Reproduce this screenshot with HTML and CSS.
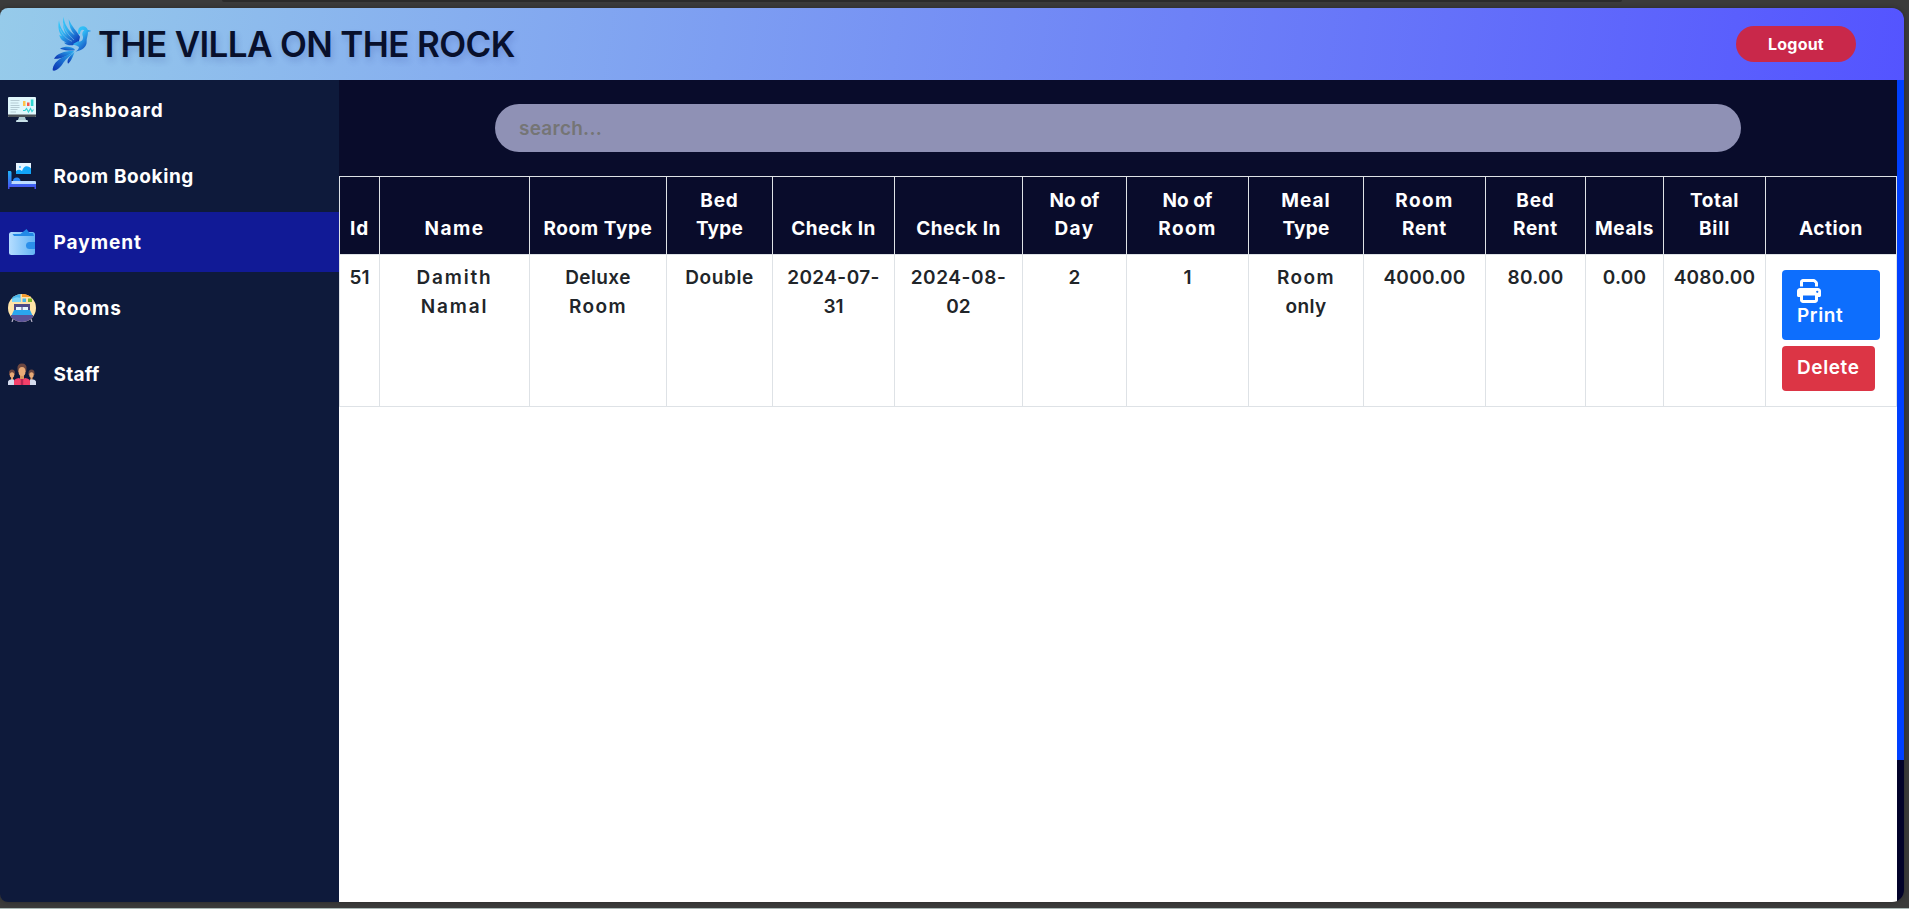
FILE: index.html
```html
<!DOCTYPE html>
<html lang="en">
<head>
<meta charset="utf-8">
<title>The Villa On The Rock</title>
<link rel="stylesheet" href="styles.css">
</head>
<body>
<div class="strip"></div>
<div class="app">
  <header class="header">
    <svg class="bird" viewBox="0 0 120 165">
      <defs>
        <linearGradient id="wing" x1="0" y1="0" x2="0.8" y2="1"><stop offset="0" stop-color="#35d0ff"/><stop offset=".45" stop-color="#2fb4f2"/><stop offset="1" stop-color="#0c35b4"/></linearGradient>
        <linearGradient id="tail" x1="1" y1="0" x2="0" y2="1"><stop offset="0" stop-color="#2cb0f0"/><stop offset="1" stop-color="#0a2eb0"/></linearGradient>
      </defs>
      <path fill="url(#wing)" d="M35 2C36 22 48 42 68 58C56 44 50 26 50 10C58 30 74 46 84 62L80 80L72 84C62 90 46 90 36 80L44 79C34 77 24 69 22 57L30 61C20 50 17 31 21 13C24 34 34 50 46 60C34 46 30 24 35 2Z"/>
      <path fill="none" stroke="#94c6ed" stroke-width="1.6" d="M33 20C37 42 48 56 66 72M24 38C30 56 42 68 60 76"/>
      <path fill="url(#wing)" d="M79 54C76 40 82 31 93 31C100 31 105 36 107 41L118 45L108 48C108 60 103 68 104 76C105 92 92 104 70 107C76 103 80 100 81 93C76 90 70 88 62 85L78 76C88 78 94 71 93 62C89 54 91 48 97 43C92 38 84 42 84 54Z"/>
      <g fill="url(#tail)">
        <path d="M68 100C60 90 38 90 24 98C40 103 54 105 68 103Z"/>
        <path d="M64 105C42 104 14 112 6 128C24 130 46 120 66 107Z"/>
        <path d="M66 108C46 120 4 128 2 163C10 168 26 154 34 140C44 126 56 120 66 108Z"/>
        <path d="M68 108C50 124 44 132 48 143C58 136 62 122 68 108Z"/>
      </g>
    </svg>
    <h1 class="brand">THE VILLA ON THE ROCK</h1>
    <button class="logout">Logout</button>
  </header>
  <div class="body">
    <nav class="sidebar">
      <a class="item">
        <svg class="icon" viewBox="0 0 28 28"><rect y="1" width="28" height="20" rx="1" fill="#e0f7fc"/><path d="M0 18.5h28V20a1 1 0 0 1-1 1H1a1 1 0 0 1-1-1z" fill="#4a5157"/><path d="M11 21h6l1 3h-8z" fill="#a9c6cf"/><path d="M8.500 24h11l.5 2h-12z" fill="#c9e3ea"/><path d="M2.500 4.500h9M2.500 7h8M2.500 9.500h9M2.500 11.500h9M2.500 13.500h7M2.500 16h5.500" stroke="#a9bfc8" stroke-width=".8"/><path d="M15 5h2.500v5H15z" fill="#ffc24a"/><path d="M19 6.500h2.500V10H19z" fill="#f4564e"/><path d="M22.800 3.500h2.600V10h-2.600z" fill="#2fd6d0"/><path d="M15 14.500h2l1.500-2 2 3.500 2-3.500 1.500 3 1.500-2" fill="none" stroke="#3bd3d4" stroke-width="1.200"/></svg>
        <span class="t5">Dashboard</span>
      </a>
      <a class="item">
        <svg class="icon" viewBox="0 0 28 28"><defs><linearGradient id="frame" x1="0" y1="0" x2="0" y2="1"><stop offset="0" stop-color="#1fb3f8"/><stop offset="1" stop-color="#4a4cf0"/></linearGradient></defs><path d="M8 1h15v11H8z" fill="#e6f4ff"/><path d="M8 9q3-2.500 6 0q2-6 6-4.500q2 .5 3 2V12H8z" fill="#12a5f8"/><circle cx="12" cy="5" r="1" fill="#4ab8fa"/><path d="M0 9h2.500q1 0 1 1.500V21H28v6h-1.500v-2H1.500v2H0z" fill="url(#frame)"/><path d="M5 19q0-3.500 4-3.500q3 .3 3.500 3.500z" fill="#2686f7"/><path d="M3.500 19H27q1 0 1 1v2H3.500z" fill="#bcdcff"/></svg>
        <span class="t3">Room Booking</span>
      </a>
      <a class="item active">
        <svg class="icon" viewBox="0 0 28 28"><defs><linearGradient id="wallet"><stop offset="0" stop-color="#b5ddff"/><stop offset="1" stop-color="#62b4f5"/></linearGradient></defs><rect x="1" y="4" width="26" height="23" rx="2.500" fill="url(#wallet)"/><path d="M4.500 6h8L18.500 1l3 4H25l1 3H6z" fill="#2289e6"/><path d="M27 14h-5.500a3.500 3.500 0 0 0 0 7H27z" fill="#2b8fea"/></svg>
        <span class="t5">Payment</span>
      </a>
      <a class="item">
        <svg class="icon" viewBox="0 0 28 28"><defs><clipPath id="disc"><circle cx="14" cy="14" r="14"/></clipPath></defs><g clip-path="url(#disc)"><path d="M0 0h28v28H0z" fill="#ffe4a8"/><path d="M4 0h8.500v8H4z" fill="#46b5ee"/><path d="M4 5q4-3 8.500-1V8H4z" fill="#7bd5fa"/><path d="M14 0h9v3h-9z" fill="#f69a2c"/><path d="M14.500 4.500h3.500V8h-3.500z" fill="#46b5ee"/><path d="M20 4.500h4V8h-4z" fill="#7fb52b"/><path d="M6 10h16v7H6z" fill="#4d4a86"/><path d="M8 13h5.500v3H8zM14.500 13H20v3h-5.500z" fill="#e6f7ff"/><path d="M6 16h16l2.500 5.500h-21z" fill="#2aa6ee"/><path d="M3 21h22v3L20 28H8l-5-4z" fill="#5a5399"/></g><path d="M5 25l-1 3M23 25l1 3" stroke="#b8b4c8" stroke-width="1.200"/></svg>
        <span class="t5">Rooms</span>
      </a>
      <a class="item">
        <svg class="icon" viewBox="0 0 28 28"><path d="M9.500 9Q9 3.500 14 3.500T18.500 9l-.5 3h-8zM1 13q0-3.500 3-3.500T7 13v2H1zM20.500 13q0-3.500 3-3.500t3 3.500v2h-6z" fill="#6d4740"/><path d="M12 15h4v4h-4zM3 17h2v3H3zM22.500 17h2v3h-2z" fill="#d9945c"/><ellipse cx="14" cy="11.500" rx="3.500" ry="4.500" fill="#e9ab77"/><ellipse cx="4" cy="15" rx="2.200" ry="2.800" fill="#e9ab77"/><ellipse cx="23.500" cy="15" rx="2.200" ry="2.800" fill="#e9ab77"/><path d="M0 25v-3q0-2 3-2.500h3V25zM22 25v-5.500h3q3 .5 3 2.500v3z" fill="#d5dcee"/><path d="M6 25v-4q0-2 5-3l3 2 3-2q5 1 5 3v4z" fill="#f4406a"/><path d="M12.800 19h2.400v6h-2.400z" fill="#b72752"/></svg>
        <span class="t1">Staff</span>
      </a>
    </nav>
    <main class="main">
      <div class="searchbar"><input class="search t1" placeholder="search..."></div>
      <table class="table">
        <colgroup><col class="c40"><col class="c150"><col class="c137"><col class="c106"><col class="c122"><col class="c128"><col class="c104"><col class="c122"><col class="c115"><col class="c122"><col class="c100"><col class="c78"><col class="c102"><col class="c131"></colgroup>
        <thead><tr>
          <th class="t4">Id</th>
          <th class="t6">Name</th>
          <th class="t3">Room Type</th>
          <th><span class="t4">Bed</span><br><span class="t1">Type</span></th>
          <th class="t2">Check In</th>
          <th class="t2">Check In</th>
          <th><span class="t0">No of</span><br><span class="t6">Day</span></th>
          <th><span class="t0">No of</span><br><span class="t6">Room</span></th>
          <th><span class="t5">Meal</span><br><span class="t1">Type</span></th>
          <th><span class="t6">Room</span><br><span class="t3">Rent</span></th>
          <th><span class="t4">Bed</span><br><span class="t3">Rent</span></th>
          <th class="t3">Meals</th>
          <th><span class="t3">Total</span><br><span class="t4">Bill</span></th>
          <th class="t3">Action</th>
        </tr></thead>
        <tbody><tr>
          <td>51</td>
          <td class="t7">Damith<br>Namal</td>
          <td><span class="t2">Deluxe</span><br><span class="t6">Room</span></td>
          <td class="t3">Double</td>
          <td><span class="t2">2024-07-</span><br>31</td>
          <td><span class="t3">2024-08-</span><br>02</td>
          <td>2</td>
          <td>1</td>
          <td><span class="t6">Room</span><br><span class="t2">only</span></td>
          <td class="t1">4000.00</td>
          <td class="t1">80.00</td>
          <td class="t1">0.00</td>
          <td class="t1">4080.00</td>
          <td class="actions">
            <button class="btn print"><svg class="printer" viewBox="0 0 512 512"><path fill="#fff" d="M128 0C92.700 0 64 28.700 64 64v96h64V64H354.700L384 93.300V160h64V93.300c0-17-6.700-33.300-18.700-45.300L400 18.700C388 6.700 371.700 0 354.700 0H128zM384 352v96H128V352H384zm64 32h32c17.700 0 32-14.300 32-32V256c0-35.300-28.700-64-64-64H64c-35.300 0-64 28.700-64 64v96c0 17.700 14.300 32 32 32H64v64c0 35.300 28.700 64 64 64H384c35.300 0 64-28.700 64-64V384zM432 248a24 24 0 1 1 0 48 24 24 0 1 1 0-48z"/></svg><span class="t3">Print</span></button>
            <button class="btn delete t3">Delete</button>
          </td>
        </tr></tbody>
      </table>
    </main>
    <div class="scroll"><div class="thumb"></div></div>
  </div>
</div>
<div class="edge"></div>
</body>
</html>
```
FILE: styles.css
```css
* { box-sizing: border-box; }
body {
  margin: 0;
  height: 909px;
  overflow: hidden;
  background: #3b3b3b;
  font: 560 19px/29px Inter, "Open Sans", sans-serif;
  color: #212529;
}
.strip {
  width: 1400px;
  height: 2px;
  margin: 0 0 6px 222px;
  background: #2b2b2b;
  border-radius: 0 0 4px 4px;
}
.app {
  width: 1904px;
  height: 894px;
  overflow: hidden;
  border-radius: 8px 12px 12px 8px;
  box-shadow: 0 0 5px rgba(0, 0, 0, .3);
}
.header {
  display: flex;
  align-items: center;
  height: 72px;
  padding: 0 48px 0 52px;
  background: linear-gradient(98deg, #96cbea, #5454ff);
}
.bird { width: 40px; height: 55px; margin-bottom: 1px; }
.brand {
  flex: 1;
  margin: 0 0 0 6px;
  font-size: 35px;
  line-height: 46px;
  font-weight: 600;
  letter-spacing: -.63px;
  color: #08102c;
  text-shadow: 2px 4px 6px rgba(30, 50, 140, .2);
}
.logout {
  width: 120px;
  height: 36px;
  padding: 0;
  border: 0;
  border-radius: 18px;
  background: #c9284a;
  color: #fff;
  font: 650 16px/36px Inter, sans-serif;
  letter-spacing: .2px;
}
.body { display: flex; height: 822px; }
.sidebar {
  display: flex;
  flex-direction: column;
  gap: 6px;
  width: 339px;
  background: #0e1a3b;
}
.item {
  display: flex;
  align-items: center;
  gap: 17.5px;
  height: 60px;
  padding-left: 8px;
  color: #fff;
  font-weight: 670;
}
.active { background: #111a96; }
.icon { width: 28px; height: 28px; }
.main { width: 1558px; background: #fff; }
.searchbar {
  display: flex;
  justify-content: center;
  align-items: center;
  height: 96px;
  background: #090c2b;
}
.search {
  width: 1246px;
  height: 48px;
  padding: 0 24px;
  border: 0;
  border-radius: 24px;
  background: #8f91b5;
  font: inherit;
}
.search::placeholder { color: #757575; opacity: 1; }
.table {
  width: 1558px;
  table-layout: fixed;
  border-collapse: separate;
  border-spacing: 0;
  border: solid #dee2e6;
  border-width: 1px 0 0 1px;
  text-align: center;
}
.table th, .table td {
  border: solid #dee2e6;
  border-width: 0 1px 1px 0;
  white-space: nowrap;
}
.table th {
  height: 78px;
  padding: 9px 0 11px;
  vertical-align: bottom;
  background: #090c2b;
  color: #fff;
  font-weight: 670;
  line-height: 28px;
}
.table td { height: 152px; padding: 8px 0 0; vertical-align: top; }
.c40 { width: 40px; }
.c78 { width: 78px; }
.c100 { width: 100px; }
.c102 { width: 102px; }
.c104 { width: 104px; }
.c106 { width: 106px; }
.c115 { width: 115px; }
.c122 { width: 122px; }
.c128 { width: 128px; }
.c131 { width: 131px; }
.c137 { width: 137px; }
.c150 { width: 150px; }
.table .actions { padding: 15px 0 0 16px; text-align: left; }
.btn {
  display: block;
  padding: 0 15px;
  border: 0;
  border-radius: 4px;
  color: #fff;
  font: 570 19px/24px Inter, sans-serif;
  text-align: left;
}
.print { width: 98px; height: 70px; margin-bottom: 6px; padding-bottom: 3px; background: #0d6efd; }
.printer { display: block; width: 24px; height: 24px; margin: 0 0 1px; }
.delete { width: 93px; height: 45px; padding-bottom: 2px; background: #dc3545; }
.scroll { width: 7px; background: #02022a; }
.thumb { height: 680px; background: #0040ff; }
.edge { height: 1px; margin-top: 6px; background: #a9b8b6; }
.t0 { letter-spacing: 0; }
.t1 { letter-spacing: .25px; }
.t2 { letter-spacing: .42px; }
.t3 { letter-spacing: .6px; }
.t4 { letter-spacing: .8px; }
.t5 { letter-spacing: .98px; }
.t6 { letter-spacing: 1.4px; }
.t7 { letter-spacing: 1.8px; }
```
